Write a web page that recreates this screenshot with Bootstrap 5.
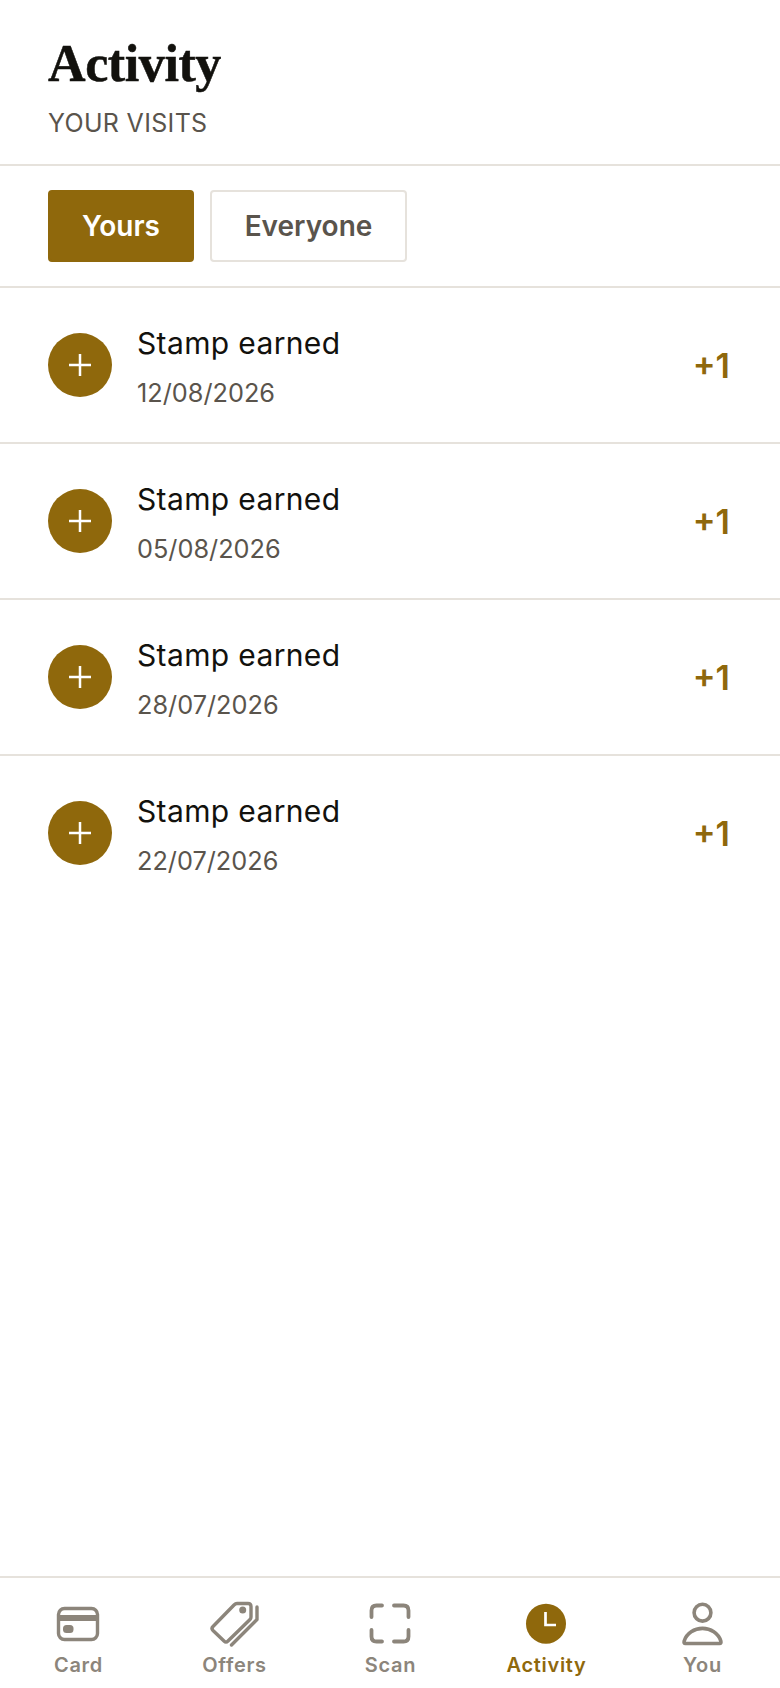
<!DOCTYPE html>
<html lang="en"><head><meta charset="utf-8"><title>Activity</title>
<link href="https://cdn.jsdelivr.net/npm/bootstrap@5.3.0/dist/css/bootstrap.min.css" rel="stylesheet">
<style>
html,body{height:100%}
body{font-family:Inter,"Liberation Sans",sans-serif;color:#12110d;background:#fff}
.app-shell{height:1688px}
.page-head{padding:33px 48px 0;border-bottom:2px solid #e6e2dc;height:166px}
.page-title{font-family:"Liberation Serif",serif;font-weight:700;font-size:52px;line-height:62px;margin:0;letter-spacing:-.4px;color:#12110d;-webkit-text-stroke:.5px #12110d}
.page-sub{font-size:25px;line-height:30px;color:#5a544c;margin-top:13px;letter-spacing:.33px;text-transform:uppercase}
.tab-bar{padding:24px 48px;border-bottom:2px solid #e6e2dc;gap:16px;height:122px}
.tab-btn{height:72px;font-size:28px;font-weight:600;border-radius:4px;border:2px solid #e6e2dc;color:#5a544c;background:#fff;padding:0;line-height:1}
.tab-btn.on{background:#8f680c;border-color:#8f680c;color:#fff}
.tab-a{width:146px}.tab-b{width:197px}
.visit-row{height:156px;padding:0 50px 0 48px;border-bottom:2px solid #e6e2dc}
.visit-row:last-child{border-bottom-color:transparent}
.visit-dot{width:64px;height:64px;background:#8f680c;margin-right:25px;flex:none}
.visit-text{padding-top:3px}
.visit-name{font-size:30px;line-height:36px;color:#12110d;letter-spacing:.36px}
.visit-date{font-size:25.3px;line-height:32px;color:#5a544c;margin-top:16px}
.visit-pts{font-size:34px;font-weight:600;color:#8f680c;line-height:1;margin-top:2px}
.foot-nav{border-top:2px solid #e6e2dc;height:112px;padding-top:22px}
.foot-item{width:156px;color:#8c857b;font-size:20px;font-weight:600;letter-spacing:.7px;line-height:24px}
.foot-item span{padding-top:1px;padding-left:1px}
.foot-item.on{color:#8f680c}
.foot-icon{height:48px;width:48px;display:block;margin-bottom:4px;overflow:visible}
</style></head><body>
<div class="app-shell d-flex flex-column">
<header class="page-head"><h1 class="page-title">Activity</h1><div class="page-sub">Your visits</div></header>
<div class="tab-bar d-flex align-items-center"><button class="btn tab-btn tab-a on">Yours</button><button class="btn tab-btn tab-b">Everyone</button></div>
<main class="flex-grow-1">
<div class="visit-row d-flex align-items-center"><span class="visit-dot rounded-circle d-flex align-items-center justify-content-center"><svg width="22" height="22" viewBox="0 0 22 22" stroke="#fff" stroke-width="2.5" fill="none"><path d="M11 0v22M0 11h22"/></svg></span><div class="visit-text flex-grow-1"><div class="visit-name">Stamp earned</div><div class="visit-date">12/08/2026</div></div><div class="visit-pts">+1</div></div>
<div class="visit-row d-flex align-items-center"><span class="visit-dot rounded-circle d-flex align-items-center justify-content-center"><svg width="22" height="22" viewBox="0 0 22 22" stroke="#fff" stroke-width="2.5" fill="none"><path d="M11 0v22M0 11h22"/></svg></span><div class="visit-text flex-grow-1"><div class="visit-name">Stamp earned</div><div class="visit-date">05/08/2026</div></div><div class="visit-pts">+1</div></div>
<div class="visit-row d-flex align-items-center"><span class="visit-dot rounded-circle d-flex align-items-center justify-content-center"><svg width="22" height="22" viewBox="0 0 22 22" stroke="#fff" stroke-width="2.5" fill="none"><path d="M11 0v22M0 11h22"/></svg></span><div class="visit-text flex-grow-1"><div class="visit-name">Stamp earned</div><div class="visit-date">28/07/2026</div></div><div class="visit-pts">+1</div></div>
<div class="visit-row d-flex align-items-center"><span class="visit-dot rounded-circle d-flex align-items-center justify-content-center"><svg width="22" height="22" viewBox="0 0 22 22" stroke="#fff" stroke-width="2.5" fill="none"><path d="M11 0v22M0 11h22"/></svg></span><div class="visit-text flex-grow-1"><div class="visit-name">Stamp earned</div><div class="visit-date">22/07/2026</div></div><div class="visit-pts">+1</div></div>
</main>
<nav class="foot-nav d-flex">
<div class="foot-item d-flex flex-column align-items-center"><svg class="foot-icon" viewBox="0 0 48 48"><rect x="4.500" y="8.500" width="39" height="31" rx="6" fill="none" stroke="#8c857b" stroke-width="3.400"/><rect x="4.500" y="15" width="39" height="6" fill="#8c857b"/><rect x="9" y="25" width="10.500" height="8" rx="3.500" fill="#8c857b"/></svg><span>Card</span></div>
<div class="foot-item d-flex flex-column align-items-center"><svg class="foot-icon" viewBox="0 0 48 48"><path d="M3 26.500L24 5Q25.500 3.500 27 3.500H38Q41 3.500 41 6.500V17Q41 18.500 40 19.500L18 41Q16 43 14 41L3 30.500Q1 28.500 3 26.500Z" fill="none" stroke="#8c857b" stroke-width="3.400" stroke-linejoin="round"/><circle cx="32.700" cy="10" r="3.500" fill="#8c857b"/><path d="M47 7V19.500L21.500 45" fill="none" stroke="#8c857b" stroke-width="3.400" stroke-linecap="round" stroke-linejoin="round"/></svg><span>Offers</span></div>
<div class="foot-item d-flex flex-column align-items-center"><svg class="foot-icon" viewBox="0 0 48 48"><path d="M5.500 17V10.500Q5.500 5.500 10.500 5.500H16M28 5.500H37.500Q42.500 5.500 42.500 10.500V17M42.500 30V36.500Q42.500 41.500 37.500 41.500H28M16 41.500H10.500Q5.500 41.500 5.500 36.500V30" fill="none" stroke="#8c857b" stroke-width="3.800" stroke-linecap="round"/></svg><span>Scan</span></div>
<div class="foot-item on d-flex flex-column align-items-center"><svg class="foot-icon" viewBox="0 0 48 48"><circle cx="24" cy="23.700" r="20" fill="#8f680c"/><path d="M23.500 12V25H34" fill="none" stroke="#fff" stroke-width="2.700"/></svg><span>Activity</span></div>
<div class="foot-item d-flex flex-column align-items-center"><svg class="foot-icon" viewBox="0 0 48 48"><circle cx="24.500" cy="12.700" r="8.400" fill="none" stroke="#8c857b" stroke-width="3.600"/><path d="M7.500 43.500H41.500Q43.500 43.500 42.800 41C40.500 33 32.500 28.400 24.500 28.400C16.500 28.400 8.500 33 6.200 41Q5.500 43.500 7.500 43.500Z" fill="none" stroke="#8c857b" stroke-width="3.600" stroke-linejoin="round"/></svg><span>You</span></div>
</nav>
</div>
<script src="https://cdn.jsdelivr.net/npm/bootstrap@5.3.0/dist/js/bootstrap.bundle.min.js"></script>
</body></html>
